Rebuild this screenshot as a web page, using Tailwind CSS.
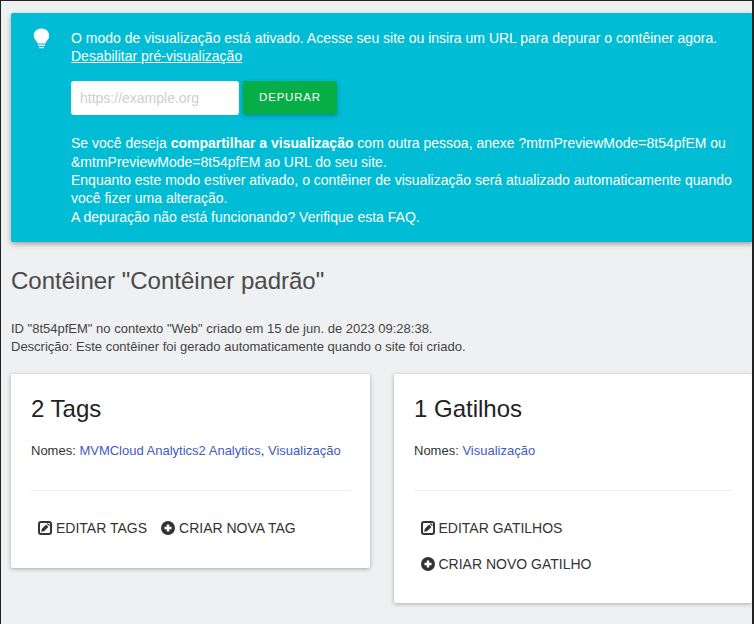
<!DOCTYPE html>
<html lang="pt">
<head>
<meta charset="utf-8">
<script src="https://cdn.jsdelivr.net/npm/@tailwindcss/browser@4"></script>
</head>
<body class="m-0 bg-[#eef0f2]">
<div class="w-[754px] h-[624px] overflow-hidden box-border border-t border-l border-r-2 border-[#222] font-['Liberation_Sans',Arial,sans-serif] text-[#444]">
  <div class="pl-[10px] pt-[12px]">
    <div class="w-[742px] h-[229px] box-border bg-[#00bcd4] rounded-[2px] shadow-[0_2px_5px_rgba(0,0,0,0.35)] text-white text-[14px] leading-[18.2px] flex">
      <div class="w-[60px] shrink-0 flex justify-center pt-[15px]">
        <svg class="w-[17px] h-[21px]" viewBox="0 0 17 21" fill="#fff"><path d="M8.5 0.5C4 0.5 0.8 3.6 0.8 7.6c0 2 .8 3.4 2 4.8.9 1 1.6 2 1.8 3h7.8c.2-1 .9-2 1.8-3 1.2-1.4 2-2.8 2-4.8C16.2 3.6 13 .5 8.5 .5z"/><path d="M5 16.6h7v1.3H5z"/><path d="M6 19h5v1.2H6z"/></svg>
      </div>
      <div class="pt-[16px] w-[682px]">
        <p class="leading-[18px]">O modo de visualização está ativado. Acesse seu site ou insira um URL para depurar o contêiner agora.<br><a class="underline">Desabilitar pré-visualização</a></p>
        <div class="flex items-center mt-[16px] gap-[4px]">
          <div class="w-[168px] h-[34px] bg-white rounded-[3px] pl-[9px] flex items-center text-[#cfcfcf] text-[14px]">https://example.org</div>
          <div class="w-[94px] h-[33px] mb-[1px] bg-[#07ad45] rounded-[2px] shadow-[0_2px_4px_rgba(0,0,0,0.25)] flex items-center justify-center text-[11.5px] tracking-[0.8px]">DEPURAR</div>
        </div>
        <p class="mt-[19.4px]">Se você deseja <strong class="font-bold">compartilhar a visualização</strong> com outra pessoa, anexe ?mtmPreviewMode=8t54pfEM ou &amp;mtmPreviewMode=8t54pfEM ao URL do seu site.<br>Enquanto este modo estiver ativado, o contêiner de visualização será atualizado automaticamente quando você fizer uma alteração.</p>
        <p class="mt-[1px]">A depuração não está funcionando? Verifique esta FAQ.</p>
      </div>
    </div>
    <h2 class="text-[24px] leading-[30px] text-[#4a4a4a] mt-[24px]">Contêiner "Contêiner padrão"</h2>
    <p class="text-[13px] leading-[18px] mt-[23.5px]">ID "8t54pfEM" no contexto "Web" criado em 15 de jun. de 2023 09:28:38.<br>Descrição: Este contêiner foi gerado automaticamente quando o site foi criado.</p>
    <div class="flex items-start gap-[24px] mt-[18.5px]">
      <section class="w-[359px] h-[194px] box-border bg-white rounded-[2px] shadow-[0_1px_4px_rgba(0,0,0,0.3)] pl-[20px] pr-[19px] pt-[21px]">
        <h3 class="text-[24px] leading-[28px] text-[#222]">2 Tags</h3>
        <p class="text-[13px] leading-[17px] text-[#333] mt-[19px]">Nomes: <a class="text-[#3f5bc4]">MVMCloud Analytics2 Analytics</a>, <a class="text-[#3f5bc4]">Visualização</a></p>
        <hr class="border-0 border-t border-[#eeeeee] mt-[31px]">
        <div class="flex gap-[14px] pl-[7px] mt-[28px] text-[14px] leading-[18px] text-[#333]">
          <span class="flex items-center gap-[4px]"><svg class="w-[14px] h-[14px]" viewBox="0 0 14 14"><rect x="1" y="1" width="12" height="12" rx="2" fill="none" stroke="#333" stroke-width="2"/><path d="M3.2 10.8l.5-2.8 4.4-4.4 2.3 2.3-4.4 4.4zM8.9 2.9l.8-.8 2.2 2.2-.8.8z" fill="#333"/></svg>EDITAR TAGS</span>
          <span class="flex items-center gap-[4px]"><svg class="w-[14px] h-[14px]" viewBox="0 0 14 14"><circle cx="7" cy="7" r="7" fill="#333"/><path d="M5.8 3.5h2.4v2.3h2.3v2.4H8.2v2.3H5.8V8.2H3.5V5.8h2.3z" fill="#fff"/></svg>CRIAR NOVA TAG</span>
        </div>
      </section>
      <section class="w-[358px] h-[229px] box-border bg-white rounded-[2px] shadow-[0_1px_4px_rgba(0,0,0,0.3)] px-[20px] pt-[21px]">
        <h3 class="text-[24px] leading-[28px] text-[#222]">1 Gatilhos</h3>
        <p class="text-[13px] leading-[17px] text-[#333] mt-[19px]">Nomes: <a class="text-[#3f5bc4]">Visualização</a></p>
        <hr class="border-0 border-t border-[#eeeeee] mt-[31px]">
        <div class="flex flex-col gap-[18px] pl-[7px] mt-[28px] text-[14px] leading-[18px] text-[#333]">
          <span class="flex items-center gap-[3.5px]"><svg class="w-[14px] h-[14px]" viewBox="0 0 14 14"><rect x="1" y="1" width="12" height="12" rx="2" fill="none" stroke="#333" stroke-width="2"/><path d="M3.2 10.8l.5-2.8 4.4-4.4 2.3 2.3-4.4 4.4zM8.9 2.9l.8-.8 2.2 2.2-.8.8z" fill="#333"/></svg>EDITAR GATILHOS</span>
          <span class="flex items-center gap-[3.5px]"><svg class="w-[14px] h-[14px]" viewBox="0 0 14 14"><circle cx="7" cy="7" r="7" fill="#333"/><path d="M5.8 3.5h2.4v2.3h2.3v2.4H8.2v2.3H5.8V8.2H3.5V5.8h2.3z" fill="#fff"/></svg>CRIAR NOVO GATILHO</span>
        </div>
      </section>
    </div>
  </div>
</div>
</body>
</html>
